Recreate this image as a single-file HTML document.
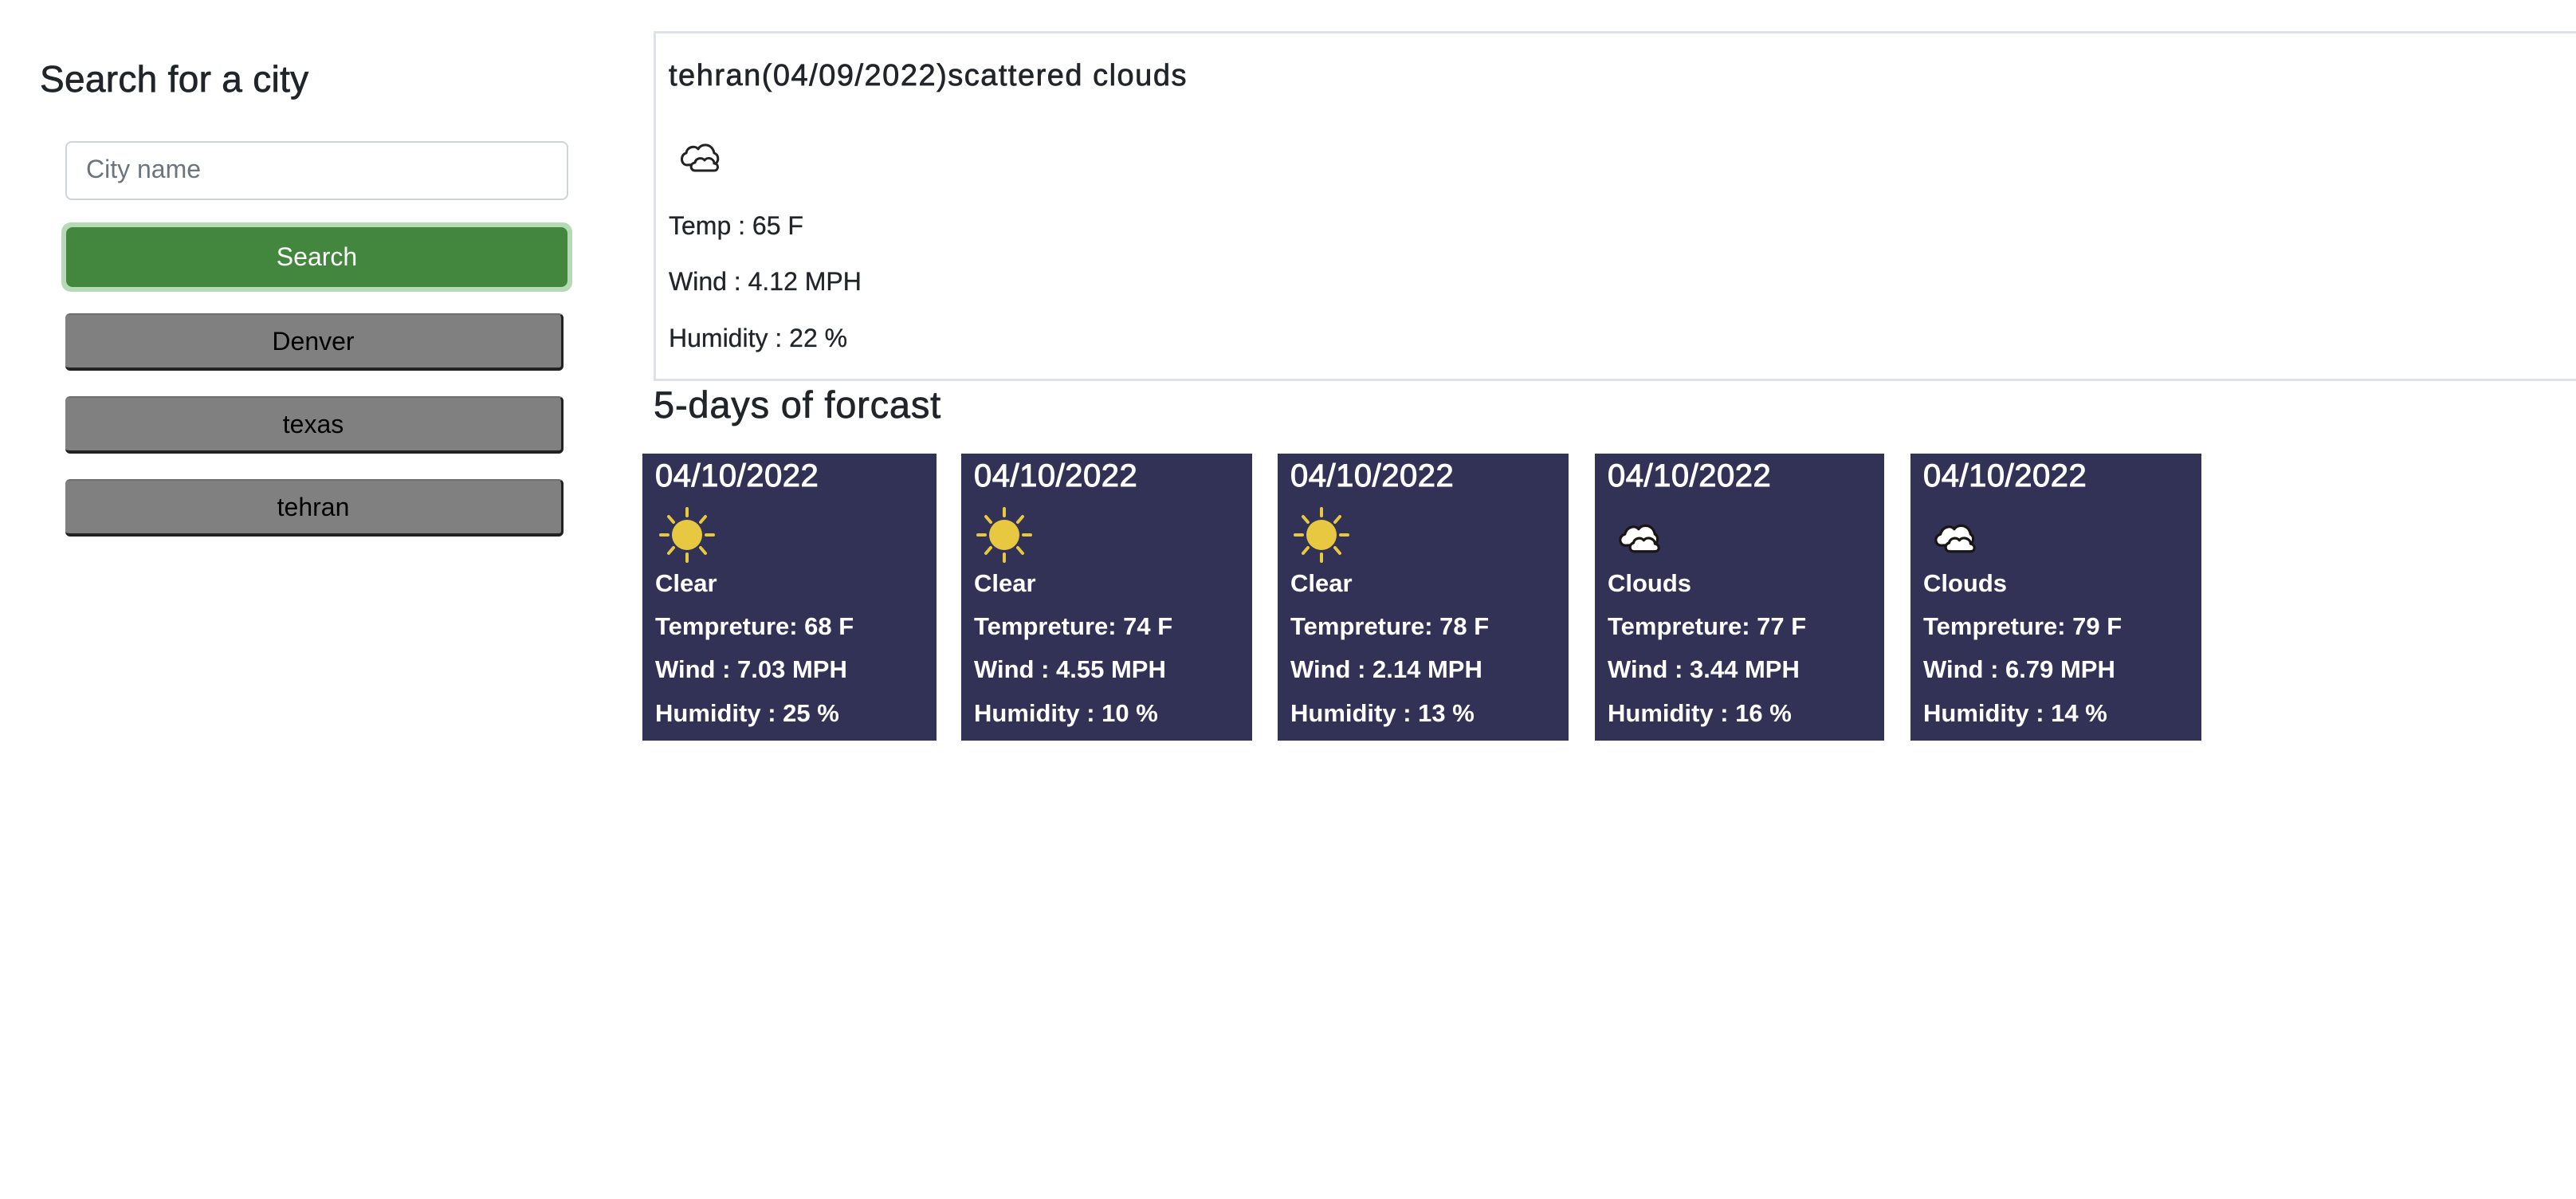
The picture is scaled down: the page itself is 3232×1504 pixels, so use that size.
<!DOCTYPE html>
<html><head><meta charset="utf-8"><style>
*{box-sizing:border-box;margin:0;padding:0}
body{width:3232px;height:1504px;background:#fff;font-family:"Liberation Sans",Arial,sans-serif;color:#212529;position:relative;overflow:hidden}
.a{position:absolute;white-space:nowrap}
.m{-webkit-text-stroke:0.7px currentColor}
.btn{position:absolute;display:flex;align-items:center;justify-content:center;font-size:32px}
.gray{background:#808080;color:#000;border-radius:6px;border-bottom:4px solid #222;border-right:3px solid #222;border-top:2px solid #6e6e6e}
.card{position:absolute;top:569px;height:360px;background:#323256;color:#fff}
.card .d{position:absolute;left:16px;top:6px;font-size:40px;-webkit-text-stroke:1px #fff;letter-spacing:0.5px}
.card .t{position:absolute;left:16px;font-size:31px;font-weight:bold}
</style></head><body>
<div class="a m" style="left:50px;top:72px;font-size:46px;letter-spacing:0.3px">Search for a city</div>
<div class="a" style="left:82px;top:177px;width:631px;height:74px;border:2px solid #ced4da;border-radius:8px"></div>
<div class="a" style="left:108px;top:194px;font-size:32px;color:#6c757d">City name</div>
<div class="btn" style="left:77px;top:279px;width:641px;height:87px;border-radius:12px;background:#b4dab6"></div>
<div class="btn" style="left:83px;top:285px;width:629px;height:75px;border-radius:8px;background:#43873f;color:#fff">Search</div>
<div class="btn gray" style="left:82px;top:393px;width:625px;height:72px">Denver</div>
<div class="btn gray" style="left:82px;top:497px;width:625px;height:72px">texas</div>
<div class="btn gray" style="left:82px;top:601px;width:625px;height:72px">tehran</div>

<div class="a" style="left:820px;top:39px;width:2500px;height:439px;border:3px solid #dee2e6"></div>
<div class="a m" style="left:839px;top:74px;font-size:38px;letter-spacing:1.5px">tehran(04/09/2022)scattered clouds</div>
<svg class="a" style="left:850px;top:172px" width="60" height="48" viewBox="0 0 60 48"><g fill="#fff" stroke="#222" stroke-width="3" stroke-linejoin="round"><path d="M12 35 C4 35 3 22 11 20 C12 12 22 10 26 15 C30 7 44 8 46 20 C52 22 52 30 48 33 Z"/><path d="M22 42 C16 42 15 33 22 32 C23 26 31 25 34 29 C38 24 46 27 46 33 C52 33 52 42 46 42 Z"/></g></svg>
<div class="a" style="left:839px;top:265px;font-size:32px;-webkit-text-stroke:0.3px #212529">Temp : 65 F</div>
<div class="a" style="left:839px;top:335px;font-size:32px;-webkit-text-stroke:0.3px #212529">Wind : 4.12 MPH</div>
<div class="a" style="left:839px;top:406px;font-size:32px;-webkit-text-stroke:0.3px #212529">Humidity : 22 %</div>
<div class="a m" style="left:820px;top:480px;font-size:47px;letter-spacing:0.8px">5-days of forcast</div>

<svg width="0" height="0" style="position:absolute"><defs>
<symbol id="sun" viewBox="0 0 72 72"><g stroke="#e8c840" stroke-width="4" stroke-linecap="round"><path d="M36 3v9M36 60v9M3 36h9M60 36h9M13 13l6 7M59 13l-6 7M13 59l6-7M59 59l-6-7"/></g><circle cx="36" cy="36" r="19" fill="#e8c840"/></symbol>
<symbol id="cl" viewBox="0 0 52 38"><g fill="#fff" stroke="#1a1414" stroke-width="3" stroke-linejoin="round"><path d="M10 28 C2 28 1 17 9 15 C11 6 21 4 25 9 C30 2 42 4 44 15 C48 17 48 24 44 26 Z"/><path d="M20 35 C14 35 13 27 19 25 C20 19 28 18 31 22 C35 17 44 20 44 26 C50 27 50 35 44 35 Z"/></g></symbol>
</defs></svg>

<div class="card" style="left:806px;width:369px"><div class="d">04/10/2022</div><svg class="a" style="left:20px;top:66px" width="72" height="72"><use href="#sun"/></svg><div class="t" style="top:145px">Clear</div><div class="t" style="top:199px">Tempreture: 68 F</div><div class="t" style="top:253px">Wind : 7.03 MPH</div><div class="t" style="top:308px">Humidity : 25 %</div></div>
<div class="card" style="left:1206px;width:365px"><div class="d">04/10/2022</div><svg class="a" style="left:18px;top:66px" width="72" height="72"><use href="#sun"/></svg><div class="t" style="top:145px">Clear</div><div class="t" style="top:199px">Tempreture: 74 F</div><div class="t" style="top:253px">Wind : 4.55 MPH</div><div class="t" style="top:308px">Humidity : 10 %</div></div>
<div class="card" style="left:1603px;width:365px"><div class="d">04/10/2022</div><svg class="a" style="left:19px;top:66px" width="72" height="72"><use href="#sun"/></svg><div class="t" style="top:145px">Clear</div><div class="t" style="top:199px">Tempreture: 78 F</div><div class="t" style="top:253px">Wind : 2.14 MPH</div><div class="t" style="top:308px">Humidity : 13 %</div></div>
<div class="card" style="left:2001px;width:363px"><div class="d">04/10/2022</div><svg class="a" style="left:28px;top:85px" width="56" height="41" viewBox="0 0 52 38"><use href="#cl"/></svg><div class="t" style="top:145px">Clouds</div><div class="t" style="top:199px">Tempreture: 77 F</div><div class="t" style="top:253px">Wind : 3.44 MPH</div><div class="t" style="top:308px">Humidity : 16 %</div></div>
<div class="card" style="left:2397px;width:365px"><div class="d">04/10/2022</div><svg class="a" style="left:28px;top:85px" width="56" height="41" viewBox="0 0 52 38"><use href="#cl"/></svg><div class="t" style="top:145px">Clouds</div><div class="t" style="top:199px">Tempreture: 79 F</div><div class="t" style="top:253px">Wind : 6.79 MPH</div><div class="t" style="top:308px">Humidity : 14 %</div></div>
</body></html>
